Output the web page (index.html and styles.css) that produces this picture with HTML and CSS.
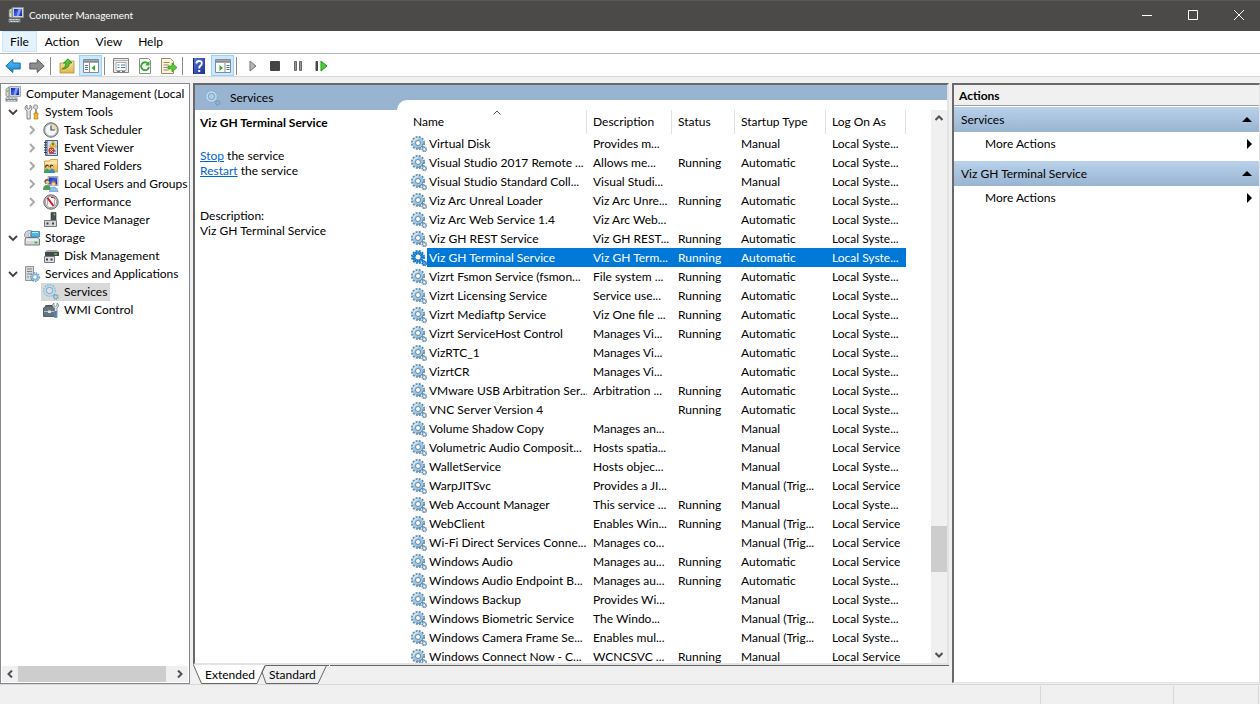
FILE: index.html
```html
<!DOCTYPE html>
<html lang="en">
<head>
<meta charset="utf-8">
<title>Computer Management</title>
<link rel="stylesheet" href="styles.css">
</head>
<body>
<svg class="defs" aria-hidden="true">
  <defs>
    <linearGradient id="g-screen" x1="0" y1="0" x2="1" y2="1"><stop offset="0" stop-color="#1420b8"/><stop offset=".5" stop-color="#3c62e8"/><stop offset="1" stop-color="#0c1a98"/></linearGradient>
    <linearGradient id="g-folder" x1="0" y1="0" x2="0" y2="1"><stop offset="0" stop-color="#fbe7a4"/><stop offset="1" stop-color="#e3b54c"/></linearGradient>
    <linearGradient id="g-help" x1="0" y1="0" x2="1" y2="1"><stop offset="0" stop-color="#5577d8"/><stop offset="1" stop-color="#1c2f94"/></linearGradient>
    <linearGradient id="g-blue" x1="0" y1="0" x2="0" y2="1"><stop offset="0" stop-color="#5cc4f4"/><stop offset="1" stop-color="#1483cf"/></linearGradient>
  </defs>
  <symbol id="computer" viewBox="0 0 16 16">
    <path d="M1 3l3-2v10l-3-1z" fill="#d9dccf" stroke="#777" stroke-width=".7"/>
    <path d="M1.500 5h2" stroke="#49b52a"/>
    <path d="M4.500.5h11v10h-11z" fill="#ced3d8" stroke="#8a9096" stroke-width=".7"/>
    <path d="M6 2h8v7H6z" fill="url(#g-screen)"/>
    <path d="M10.500 2H13l-2 7H8.500z" fill="#a9bdfb" opacity=".7"/>
    <path d="M.5 11.500h12v4H.5z" fill="#7d868c"/><path d="M1.500 12.500h10M2.500 14.500h8" stroke="#dfe4e6" stroke-dasharray="2 1"/>
  </symbol>
  <symbol id="tools" viewBox="0 0 16 16">
    <path d="M3 1v3l1.500 1L6 4V1q2 1 2 3T6.200 7v8H3V7Q1 6 1 4t2-3z" fill="#e3e3e3" stroke="#777" stroke-width=".9"/>
    <path d="M10 1h3l1 3-1.500 1v4h-1V5L9.500 4z" fill="#ddd" stroke="#777" stroke-width=".7"/>
    <path d="M10 9h4v2l-.5 1 .5 3h-4l.5-3-.5-1z" fill="#f4b729" stroke="#b97a10" stroke-width=".7"/>
  </symbol>
  <symbol id="clock" viewBox="0 0 16 16">
    <circle cx="8" cy="8" r="7.200" fill="#b8bbbe" stroke="#696d70"/><circle cx="8" cy="8" r="5.500" fill="#f4f8fb"/>
    <path d="M8 2.500A5.500 5.500 0 0 1 13.500 8H8z" fill="#f6dca0"/><path d="M8 3.500V8h4" fill="none" stroke="#3f5262" stroke-width="1.200"/>
  </symbol>
  <symbol id="event" viewBox="0 0 16 16">
    <path d="M2.500.5h12v15h-12z" fill="#8aa3c0" stroke="#4a6484"/><path d="M5 1h9v14H5z" fill="#cfdeed"/>
    <path d="M1 2.500h3M1 5h3M1 7.500h3M1 10h3M1 12.500h3" stroke="#444"/>
    <path d="M6 11h7M6 13.500h7" stroke="#678"/>
    <path d="M10 1l3.500 6h-7z" fill="#ffd52e" stroke="#ae8610" stroke-width=".6"/><path d="M10 3v2.500" stroke="#222"/>
    <circle cx="8.500" cy="10.500" r="3" fill="#d9362b"/><path d="M7.300 9.300l2.400 2.400m0-2.400l-2.400 2.400" stroke="#fff"/>
  </symbol>
  <symbol id="shared" viewBox="0 0 16 16">
    <path d="M1.500 3h5l1-1.500h7V14h-13z" fill="url(#g-folder)" stroke="#bb9138" stroke-width=".8"/><path d="M2 5h12" stroke="#fff5cc"/>
    <circle cx="4" cy="8.500" r="1.900" fill="#5b4327"/><circle cx="8.500" cy="8.500" r="1.900" fill="#5b4327"/><circle cx="4.500" cy="9.200" r="1.200" fill="#efc8a0"/><circle cx="9" cy="9.200" r="1.200" fill="#efc8a0"/>
    <path d="M1 15q0-4 3-4t3 4z" fill="#38a36a"/><path d="M6 15q0-4 3-4t3 4z" fill="#318fb8"/>
  </symbol>
  <symbol id="users" viewBox="0 0 16 16">
    <path d="M5 .5h10v9H5z" fill="#ced3d8" stroke="#8a9096" stroke-width=".7"/><path d="M6 1.500h8v7H6z" fill="url(#g-screen)"/>
    <circle cx="4" cy="5.500" r="2.600" fill="#6f5128"/><circle cx="4.400" cy="6.300" r="1.700" fill="#efc8a0"/><path d="M0 14q0-5 4-5t4 5z" fill="#4a9f54"/>
    <circle cx="10.500" cy="7.500" r="2.400" fill="#b68b3c"/><circle cx="10.500" cy="8.300" r="1.700" fill="#f4d1ac"/><path d="M6.500 16q0-5 4-5t4.500 5z" fill="#8fc1e6" stroke="#5d94bd" stroke-width=".6"/>
  </symbol>
  <symbol id="perf" viewBox="0 0 16 16">
    <circle cx="8" cy="8" r="7.200" fill="#c7c9cb" stroke="#666"/><circle cx="8" cy="8" r="5.600" fill="#fff" stroke="#777" stroke-width=".6"/>
    <path d="M4.500 11V6M11.500 11V6" stroke="#999" stroke-width=".8"/><path d="M4.500 3.800l6 8.200" stroke="#cf1f2b" stroke-width="2"/><path d="M8 3.500h2.500l1.500 2" stroke="#cf1f2b" fill="none"/>
  </symbol>
  <symbol id="device" viewBox="0 0 16 16">
    <path d="M8 .5h5v9H8z" fill="#4c5052" stroke="#303335" stroke-width=".6"/><circle cx="11.500" cy="2.500" r="1" fill="#54d13f"/>
    <path d="M1.500 8.500h12v6h-12z" fill="#d3d5d6" stroke="#777b7e"/><path d="M3.500 10.500h2v2h-2zM9 10.500h2v2H9z" fill="#3c4042"/>
  </symbol>
  <symbol id="storage" viewBox="0 0 16 16">
    <ellipse cx="5.500" cy="5" rx="5" ry="4.500" fill="#d2d5d8" stroke="#7f8589" stroke-width=".8"/><circle cx="5.500" cy="5" r="1.300" fill="#fff" stroke="#888" stroke-width=".6"/>
    <path d="M7 1.500h8.500v5.500H7z" fill="#4fb5e2" stroke="#2d7da8" stroke-width=".8"/><path d="M8 2.500h6" stroke="#bce8fa"/>
    <path d="M1 9l1.500-1.500h11L15.500 9v6H1z" fill="#d5d8da" stroke="#686c6f" stroke-width=".9"/><path d="M2 10h12" stroke="#fff"/><path d="M10.500 12.500h3" stroke="#37bd2b" stroke-width="1.800"/>
  </symbol>
  <symbol id="disk" viewBox="0 0 16 16">
    <path d="M2 4l2-2h10l2 2v4H2z" fill="#a9adb0"/><path d="M2 4h14v4H2z" fill="#45494b"/><path d="M11 6h3" stroke="#4fd43b" stroke-width="1.400"/>
    <path d="M1.500 8.500h10v6h-10z" fill="#dcdedf" stroke="#777b7e"/><path d="M3 10.500h2v2H3zM7.500 10.500h2v2h-2z" fill="#3c4042"/>
  </symbol>
  <symbol id="gear" viewBox="0 0 16 16">
    <circle cx="7" cy="7" r="6" fill="none" stroke="#5f87a8" stroke-width="2" stroke-dasharray="2 1.140"/>
    <circle cx="7" cy="7" r="4" fill="#f4f9fc" stroke="#9cc5e2" stroke-width="3"/>
    <path d="M2.500 7A4.500 4.500 0 0 1 7 2.500" fill="none" stroke="#d3eaf8" stroke-width="1.400"/>
    <path d="M12.200 7.500A5.300 5.300 0 0 1 5.500 12" fill="none" stroke="#5b84a8" stroke-width="1"/>
    <circle cx="7" cy="7" r="2.500" fill="#fff" stroke="#55799a" stroke-width=".9"/>
    <circle cx="13.300" cy="13.300" r="2" fill="#dbe9f2" stroke="#648baa" stroke-width="1.700" stroke-dasharray="1.200 .4"/><circle cx="13.300" cy="13.300" r=".8" fill="#fff"/>
  </symbol>
  <symbol id="gear-soft" viewBox="0 0 16 16">
    <circle cx="6.500" cy="6.500" r="5.600" fill="none" stroke="#7fb0d2" stroke-width="1.400" stroke-dasharray="1.600 1"/>
    <circle cx="6.500" cy="6.500" r="4.300" fill="none" stroke="#b8dcf0" stroke-width="2"/><circle cx="6.500" cy="6.500" r="3.200" fill="#e5eef5" fill-opacity=".4" stroke="#6b9abb" stroke-width=".8"/>
    <circle cx="12.800" cy="12.800" r="2" fill="none" stroke="#739fbe" stroke-width="1.800" stroke-dasharray="1.200 .4"/>
  </symbol>
  <symbol id="gear-selected" viewBox="0 0 16 16">
    <circle cx="7" cy="7" r="6" fill="none" stroke="#147bd0" stroke-width="2" stroke-dasharray="2 1.140"/>
    <circle cx="7" cy="7" r="4" fill="#fff" stroke="#4ba0e0" stroke-width="3"/><circle cx="7" cy="7" r="4" fill="none" stroke="#0967b6" stroke-width="3" stroke-dasharray="1 1"/>
    <circle cx="13.300" cy="13.300" r="2" fill="#68b1e8" stroke="#086bbf" stroke-width="1.700" stroke-dasharray="1.200 .4"/>
  </symbol>
  <symbol id="server" viewBox="0 0 16 16">
    <path d="M1.500.5h8v14h-8z" fill="#d6dadd" stroke="#868b8f" stroke-width=".9"/><path d="M3 3h5M3 5.500h5M3 8h5" stroke="#7f8488"/><path d="M3 11h2" stroke="#49b52a"/>
    <circle cx="11" cy="11" r="4.200" fill="none" stroke="#5f8eb5" stroke-width="1.400" stroke-dasharray="1.500 1"/><circle cx="11" cy="11" r="2.700" fill="#fff" stroke="#8ab7d6" stroke-width="2"/>
  </symbol>
  <symbol id="wmi" viewBox="0 0 16 16">
    <path d="M3 6V3.500h6V6" fill="none" stroke="#4c565d" stroke-width="1.200"/><path d="M.5 6l2-1.500h9L13 6v8.500H.5z" fill="#66747e" stroke="#3f4a51" stroke-width=".8"/><path d="M1 9.500h11" stroke="#b4bfc6"/><path d="M5 8.500h3v2.500H5z" fill="#e0e4e6"/>
    <path d="M11 1v2.500l1.500 1 1.500-1V1q2 1 1.500 3.500L14 6v9.500h-2.500V6Q9.500 5 9.500 3.500T11 1z" fill="#dce4e9" stroke="#66737c" stroke-width=".7"/><path d="M12 9h1.800v6H12z" fill="#3c82c4"/>
  </symbol>
  <symbol id="arrow" viewBox="0 0 16 16"><path d="M.8 8l7-6.500V5h7.400v6H7.800v3.500z" stroke-linejoin="round"/></symbol>
  <symbol id="left" viewBox="0 0 8 8"><path d="M6 .5L2.500 4 6 7.500" fill="none" stroke="#505050" stroke-width="2"/></symbol>
  <symbol id="right" viewBox="0 0 8 8"><path d="M2 .5L5.500 4 2 7.500" fill="none" stroke="#505050" stroke-width="2"/></symbol>
  <symbol id="up" viewBox="0 0 8 8"><path d="M.5 6L4 2.500 7.500 6" fill="none" stroke="#505050" stroke-width="2"/></symbol>
  <symbol id="down" viewBox="0 0 8 8"><path d="M.5 2L4 5.500 7.500 2" fill="none" stroke="#505050" stroke-width="2"/></symbol>
  <symbol id="open" viewBox="0 0 10 10"><path d="M1 3l4 4 4-4" fill="none" stroke="#404040" stroke-width="1.800"/></symbol>
  <symbol id="closed" viewBox="0 0 10 10"><path d="M3 1l4 4-4 4" fill="none" stroke="#a6a6a6" stroke-width="1.800"/></symbol>
</svg>

<header class="titlebar">
  <svg class="icon"><use href="#computer"/></svg>
  <h1>Computer Management</h1>
  <button class="win-btn" aria-label="Minimize"><svg viewBox="0 0 10 10"><path d="M0 5.500h10"/></svg></button>
  <button class="win-btn" aria-label="Maximize"><svg viewBox="0 0 10 10"><path d="M.5.5h9v9h-9z"/></svg></button>
  <button class="win-btn" aria-label="Close"><svg viewBox="0 0 10 10"><path d="M0 0l10 10M10 0L0 10"/></svg></button>
</header>

<nav class="menubar" aria-label="Menu">
  <button class="menu current">File</button><button class="menu">Action</button><button class="menu">View</button><button class="menu">Help</button>
</nav>

<div class="toolbar" role="toolbar" aria-label="Tools">
  <button class="tool" aria-label="Back"><svg class="icon"><use href="#arrow" fill="url(#g-blue)" stroke="#1a6fae"/></svg></button>
  <button class="tool" aria-label="Forward"><svg class="icon flip"><use href="#arrow" fill="#8d8d8d" stroke="#606060"/></svg></button>
  <span class="sep"></span>
  <button class="tool" aria-label="Up one level"><svg class="icon" viewBox="0 0 16 16"><path d="M1 5h5l1-2h8v12H1z" fill="url(#g-folder)" stroke="#b78e35" stroke-width=".8"/><path d="M3 11Q7 10 7 5H4.500L9 .8 13 5h-2.500Q10 11 3 11z" fill="#56c237" stroke="#278519" stroke-width=".8"/></svg></button>
  <button class="tool on" aria-label="Console tree"><svg class="icon" viewBox="0 0 16 16"><path d="M.5 1.500h15v13H.5z" fill="#fff" stroke="#858b91"/><path d="M1 3.500h14" stroke="#858b91" stroke-width="2.500"/><path d="M6.500 5v9" stroke="#858b91"/><path d="M2 7.500h3M2 9.500h3M2 11.500h3" stroke="#4a78a8"/><path d="M12 7v6L8.500 10z" fill="#35a82b"/></svg></button>
  <span class="sep"></span>
  <button class="tool" aria-label="Properties"><svg class="icon" viewBox="0 0 16 16"><path d="M.5.5h15v14H.5z" fill="#eee" stroke="#838383"/><path d="M1 2.500h14" stroke="#b0b0b0"/><path d="M3 4.500h10v8H3z" fill="#fff" stroke="#9a9a9a" stroke-width=".8"/><path d="M4.500 7h2M4.500 9.500h2M8 7h4M8 9.500h4" stroke="#447bb0"/><path d="M4 13.500h3M9 13.500h3" stroke="#777"/></svg></button>
  <button class="tool" aria-label="Refresh"><svg class="icon" viewBox="0 0 16 16"><path d="M2.500.5h9l2 2v13h-11z" fill="#fff" stroke="#8d8d8d"/><path d="M11 5.500A4 4 0 1 0 12 9" fill="none" stroke="#35a82b" stroke-width="1.800"/><path d="M12.500 3v4.500H8z" fill="#35a82b"/></svg></button>
  <button class="tool" aria-label="Export list"><svg class="icon" viewBox="0 0 16 16"><path d="M.5.5h9l3 3v12H.5z" fill="#fff5d2" stroke="#9a8d6c"/><path d="M2.500 4.500h6M2.500 7h5M2.500 9.500h4M2.500 12h5" stroke="#8b8b8b"/><path d="M7 8h4V5l5 4.500-5 4.500v-3H7z" fill="#59c83a" stroke="#2f8c20" stroke-width=".7"/></svg></button>
  <span class="sep"></span>
  <button class="tool" aria-label="Help"><svg class="icon" viewBox="0 0 16 16"><path d="M2 0h12v16H2z" fill="url(#g-help)"/><path d="M2.500 0v16" stroke="#142272"/><path d="M5.500 5.500Q5.500 3 8.200 3t2.600 2.300Q10.800 7 9.300 7.900 8.200 8.600 8.200 10.500" fill="none" stroke="#fff" stroke-width="1.900"/><path d="M7.200 12h2v2h-2z" fill="#fff"/></svg></button>
  <button class="tool on" aria-label="Action pane"><svg class="icon" viewBox="0 0 16 16"><path d="M.5 1.500h15v13H.5z" fill="#fff" stroke="#858b91"/><path d="M1 3.500h14" stroke="#858b91" stroke-width="2.500"/><path d="M10 5v9" stroke="#858b91"/><path d="M11.500 7.500h3M11.500 9.500h3M11.500 11.500h3" stroke="#4a78a8"/><path d="M4.500 7v6L8 10z" fill="#35a82b"/></svg></button>
  <span class="sep"></span>
  <button class="tool media" aria-label="Start"><svg class="icon" viewBox="0 0 16 16"><path d="M6 3l6 5-6 5z" fill="#b4b4b4" stroke="#777"/></svg></button>
  <button class="tool media" aria-label="Stop"><svg class="icon" viewBox="0 0 16 16"><rect x="3" y="3" width="10" height="10" rx="1" fill="#444"/></svg></button>
  <button class="tool media" aria-label="Pause"><svg class="icon" viewBox="0 0 16 16"><path d="M4.500 3.500h2v9h-2zM9.500 3.500h2v9h-2z" fill="#999" stroke="#666"/></svg></button>
  <button class="tool media" aria-label="Restart"><svg class="icon" viewBox="0 0 16 16"><path d="M3 3.500h1.500v9H3z" fill="#555" stroke="#444"/><path d="M8 3l6 5-6 5z" fill="#42d331" stroke="#219417"/></svg></button>
</div>

<main class="workspace">
  <nav class="tree" aria-label="Console tree">
    <div class="tree-body">
      <a class="node root" href="#"><svg class="icon"><use href="#computer"/></svg>Computer Management (Local</a>
      <ul>
        <li><div class="branch"><svg class="tw"><use href="#open"/></svg><a class="node" href="#"><svg class="icon"><use href="#tools"/></svg>System Tools</a></div>
          <ul>
            <li class="branch"><svg class="tw"><use href="#closed"/></svg><a class="node" href="#"><svg class="icon"><use href="#clock"/></svg>Task Scheduler</a></li>
            <li class="branch"><svg class="tw"><use href="#closed"/></svg><a class="node" href="#"><svg class="icon"><use href="#event"/></svg>Event Viewer</a></li>
            <li class="branch"><svg class="tw"><use href="#closed"/></svg><a class="node" href="#"><svg class="icon"><use href="#shared"/></svg>Shared Folders</a></li>
            <li class="branch"><svg class="tw"><use href="#closed"/></svg><a class="node" href="#"><svg class="icon"><use href="#users"/></svg>Local Users and Groups</a></li>
            <li class="branch"><svg class="tw"><use href="#closed"/></svg><a class="node" href="#"><svg class="icon"><use href="#perf"/></svg>Performance</a></li>
            <li class="branch"><svg class="tw"></svg><a class="node" href="#"><svg class="icon"><use href="#device"/></svg>Device Manager</a></li>
          </ul></li>
        <li><div class="branch"><svg class="tw"><use href="#open"/></svg><a class="node" href="#"><svg class="icon"><use href="#storage"/></svg>Storage</a></div>
          <ul>
            <li class="branch"><svg class="tw"></svg><a class="node" href="#"><svg class="icon"><use href="#disk"/></svg>Disk Management</a></li>
          </ul></li>
        <li><div class="branch"><svg class="tw"><use href="#open"/></svg><a class="node" href="#"><svg class="icon"><use href="#server"/></svg>Services and Applications</a></div>
          <ul>
            <li class="branch"><svg class="tw"></svg><a class="node chosen" href="#"><svg class="icon"><use href="#gear-soft"/></svg>Services</a></li>
            <li class="branch"><svg class="tw"></svg><a class="node" href="#"><svg class="icon"><use href="#wmi"/></svg>WMI Control</a></li>
          </ul></li>
      </ul>
    </div>
    <div class="hscroll">
      <button class="scroll-btn" aria-label="Scroll left"><svg><use href="#left"/></svg></button>
      <div class="htrack"><div class="hthumb"></div></div>
      <button class="scroll-btn" aria-label="Scroll right"><svg><use href="#right"/></svg></button>
    </div>
  </nav>

  <section class="center">
    <div class="result">
      <div class="detail">
        <h2 class="banner"><svg class="icon"><use href="#gear-soft"/></svg>Services</h2>
        <div class="info">
          <h3>Viz GH Terminal Service</h3>
          <p class="links"><a href="#">Stop</a> the service<br><a href="#">Restart</a> the service</p>
          <p>Description:<br>Viz GH Terminal Service</p>
        </div>
      </div>
      <div class="list-side">
        <div class="list-panel">
          <div class="list-view">
            <table>
              <colgroup><col class="c-name"><col class="c-desc"><col class="c-status"><col class="c-start"><col class="c-log"></colgroup>
              <thead><tr><th>Name<svg class="sort" viewBox="0 0 8 5"><path d="M.5 4.500L4 1l3.500 3.500" fill="none" stroke="#555"/></svg></th><th>Description</th><th>Status</th><th>Startup Type</th><th>Log On As</th></tr></thead>
              <tbody>
                <tr><td><div class="svc"><svg class="icon"><use href="#gear"/></svg><span>Virtual Disk</span></div></td><td>Provides m...</td><td></td><td>Manual</td><td>Local Syste...</td></tr>
                <tr><td><div class="svc"><svg class="icon"><use href="#gear"/></svg><span>Visual Studio 2017 Remote ...</span></div></td><td>Allows me...</td><td>Running</td><td>Automatic</td><td>Local Syste...</td></tr>
                <tr><td><div class="svc"><svg class="icon"><use href="#gear"/></svg><span>Visual Studio Standard Coll...</span></div></td><td>Visual Studi...</td><td></td><td>Manual</td><td>Local Syste...</td></tr>
                <tr><td><div class="svc"><svg class="icon"><use href="#gear"/></svg><span>Viz Arc Unreal Loader</span></div></td><td>Viz Arc Unre...</td><td>Running</td><td>Automatic</td><td>Local Syste...</td></tr>
                <tr><td><div class="svc"><svg class="icon"><use href="#gear"/></svg><span>Viz Arc Web Service 1.4</span></div></td><td>Viz Arc Web...</td><td></td><td>Automatic</td><td>Local Syste...</td></tr>
                <tr><td><div class="svc"><svg class="icon"><use href="#gear"/></svg><span>Viz GH REST Service</span></div></td><td>Viz GH REST...</td><td>Running</td><td>Automatic</td><td>Local Syste...</td></tr>
                <tr class="selected"><td><div class="svc"><svg class="icon"><use href="#gear-selected"/></svg><span>Viz GH Terminal Service</span></div></td><td>Viz GH Term...</td><td>Running</td><td>Automatic</td><td>Local Syste...</td></tr>
                <tr><td><div class="svc"><svg class="icon"><use href="#gear"/></svg><span>Vizrt Fsmon Service (fsmon...</span></div></td><td>File system ...</td><td>Running</td><td>Automatic</td><td>Local Syste...</td></tr>
                <tr><td><div class="svc"><svg class="icon"><use href="#gear"/></svg><span>Vizrt Licensing Service</span></div></td><td>Service use...</td><td>Running</td><td>Automatic</td><td>Local Syste...</td></tr>
                <tr><td><div class="svc"><svg class="icon"><use href="#gear"/></svg><span>Vizrt Mediaftp Service</span></div></td><td>Viz One file ...</td><td>Running</td><td>Automatic</td><td>Local Syste...</td></tr>
                <tr><td><div class="svc"><svg class="icon"><use href="#gear"/></svg><span>Vizrt ServiceHost Control</span></div></td><td>Manages Vi...</td><td>Running</td><td>Automatic</td><td>Local Syste...</td></tr>
                <tr><td><div class="svc"><svg class="icon"><use href="#gear"/></svg><span>VizRTC_1</span></div></td><td>Manages Vi...</td><td></td><td>Automatic</td><td>Local Syste...</td></tr>
                <tr><td><div class="svc"><svg class="icon"><use href="#gear"/></svg><span>VizrtCR</span></div></td><td>Manages Vi...</td><td></td><td>Automatic</td><td>Local Syste...</td></tr>
                <tr><td><div class="svc"><svg class="icon"><use href="#gear"/></svg><span>VMware USB Arbitration Ser...</span></div></td><td>Arbitration ...</td><td>Running</td><td>Automatic</td><td>Local Syste...</td></tr>
                <tr><td><div class="svc"><svg class="icon"><use href="#gear"/></svg><span>VNC Server Version 4</span></div></td><td></td><td>Running</td><td>Automatic</td><td>Local Syste...</td></tr>
                <tr><td><div class="svc"><svg class="icon"><use href="#gear"/></svg><span>Volume Shadow Copy</span></div></td><td>Manages an...</td><td></td><td>Manual</td><td>Local Syste...</td></tr>
                <tr><td><div class="svc"><svg class="icon"><use href="#gear"/></svg><span>Volumetric Audio Composit...</span></div></td><td>Hosts spatia...</td><td></td><td>Manual</td><td>Local Service</td></tr>
                <tr><td><div class="svc"><svg class="icon"><use href="#gear"/></svg><span>WalletService</span></div></td><td>Hosts objec...</td><td></td><td>Manual</td><td>Local Syste...</td></tr>
                <tr><td><div class="svc"><svg class="icon"><use href="#gear"/></svg><span>WarpJITSvc</span></div></td><td>Provides a JI...</td><td></td><td>Manual (Trig...</td><td>Local Service</td></tr>
                <tr><td><div class="svc"><svg class="icon"><use href="#gear"/></svg><span>Web Account Manager</span></div></td><td>This service ...</td><td>Running</td><td>Manual</td><td>Local Syste...</td></tr>
                <tr><td><div class="svc"><svg class="icon"><use href="#gear"/></svg><span>WebClient</span></div></td><td>Enables Win...</td><td>Running</td><td>Manual (Trig...</td><td>Local Service</td></tr>
                <tr><td><div class="svc"><svg class="icon"><use href="#gear"/></svg><span>Wi-Fi Direct Services Conne...</span></div></td><td>Manages co...</td><td></td><td>Manual (Trig...</td><td>Local Service</td></tr>
                <tr><td><div class="svc"><svg class="icon"><use href="#gear"/></svg><span>Windows Audio</span></div></td><td>Manages au...</td><td>Running</td><td>Automatic</td><td>Local Service</td></tr>
                <tr><td><div class="svc"><svg class="icon"><use href="#gear"/></svg><span>Windows Audio Endpoint B...</span></div></td><td>Manages au...</td><td>Running</td><td>Automatic</td><td>Local Syste...</td></tr>
                <tr><td><div class="svc"><svg class="icon"><use href="#gear"/></svg><span>Windows Backup</span></div></td><td>Provides Wi...</td><td></td><td>Manual</td><td>Local Syste...</td></tr>
                <tr><td><div class="svc"><svg class="icon"><use href="#gear"/></svg><span>Windows Biometric Service</span></div></td><td>The Windo...</td><td></td><td>Manual (Trig...</td><td>Local Syste...</td></tr>
                <tr><td><div class="svc"><svg class="icon"><use href="#gear"/></svg><span>Windows Camera Frame Se...</span></div></td><td>Enables mul...</td><td></td><td>Manual (Trig...</td><td>Local Syste...</td></tr>
                <tr><td><div class="svc"><svg class="icon"><use href="#gear"/></svg><span>Windows Connect Now - C...</span></div></td><td>WCNCSVC ...</td><td>Running</td><td>Manual</td><td>Local Service</td></tr>
              </tbody>
            </table>
          </div>
          <div class="vscroll">
            <button class="scroll-btn" aria-label="Scroll up"><svg><use href="#up"/></svg></button>
            <div class="vtrack"><div class="vthumb"></div></div>
            <button class="scroll-btn" aria-label="Scroll down"><svg><use href="#down"/></svg></button>
          </div>
        </div>
      </div>
    </div>
    <div class="tabs" role="tablist">
      <svg class="tab-art" viewBox="0 0 136 19"><path d="M0 0l9 18h55l8-18z" fill="#fff"/><path d="M.5 0l8 18.500H64L72 .5M69 7l4 11.500h52L133.500.5M69 7l3.500-6.500H136" fill="none" stroke="#666"/></svg>
      <button class="tab" role="tab" aria-selected="true">Extended</button>
      <button class="tab" role="tab" aria-selected="false">Standard</button>
      <span class="tab-line"></span>
    </div>
  </section>

  <aside class="actions">
    <h2>Actions</h2>
    <button class="group">Services<svg viewBox="0 0 10 5"><path d="M0 5l5-5 5 5z"/></svg></button>
    <button class="more">More Actions<svg viewBox="0 0 5 10"><path d="M0 0l5 5-5 5z"/></svg></button>
    <button class="group">Viz GH Terminal Service<svg viewBox="0 0 10 5"><path d="M0 5l5-5 5 5z"/></svg></button>
    <button class="more">More Actions<svg viewBox="0 0 5 10"><path d="M0 0l5 5-5 5z"/></svg></button>
  </aside>
</main>

<footer class="statusbar"><span class="cell wide"></span><span class="cell mid"></span><span class="cell end"></span></footer>
</body>
</html>
```
FILE: styles.css
```css
* { box-sizing: border-box; }

body {
  margin: 0;
  height: 100vh;
  display: flex;
  flex-direction: column;
  overflow: hidden;
  background: #f0f0f0;
  color: #000;
  font: 12px/15px Lato, "Open Sans", sans-serif;
}

h1, h2, h3, p, ul { margin: 0; padding: 0; }
ul { list-style: none; }

button {
  margin: 0;
  padding: 0;
  border: 0;
  background: none;
  color: inherit;
  font: inherit;
  text-align: left;
}

svg { display: block; flex: none; }
.defs { position: absolute; width: 0; height: 0; }
.icon { width: 16px; height: 16px; }
.flip { transform: scaleX(-1); }

/* Title bar */
.titlebar {
  display: flex;
  align-items: center;
  height: 31px;
  flex: none;
  padding: 0 1px 2px 8px;
  gap: 5px;
  background: #4c4a48;
  border-top: 1px solid #5c5a58;
  color: #fff;
}
.titlebar h1 { flex: 1; font-size: 10px; font-weight: 400; }
.win-btn { width: 41px; height: 28px; display: flex; align-items: center; justify-content: center; }
.win-btn svg { width: 10px; height: 10px; fill: none; stroke: #fff; overflow: visible; }

/* Menu */
.menubar {
  display: flex;
  flex: none;
  height: 23px;
  padding-left: 2px;
  background: #fff;
  border-bottom: 1px solid #b4b4be;
}
.menu { height: 21px; padding: 0 7px; border: 1px solid transparent; line-height: 19px; }
.menu.current { background: #e5f3ff; border-color: #cce8ff; }

/* Toolbar */
.toolbar {
  display: flex;
  align-items: center;
  flex: none;
  gap: 1px;
  height: 23px;
  padding: 1px 0 0 1px;
  background: #fff;
  border-bottom: 1px solid #d7d7d7;
}
.tool { width: 23px; height: 21px; display: flex; align-items: center; justify-content: center; border: 1px solid transparent; }
.tool.media { width: 22px; }
.tool.on { background: #cce8ff; border-color: #99d1ff; }
.sep { width: 1px; height: 18px; margin: 0 3px 0 1px; background: #8a8a8a; }

/* Workspace */
.workspace { flex: 1; min-height: 0; display: flex; padding-top: 6px; }

.tree {
  flex: none;
  width: 190px;
  display: flex;
  flex-direction: column;
  background: #fff;
  border: 1px solid #828790;
}
.tree-body { flex: 1; min-height: 0; overflow: hidden; padding: 1px 0 0 2px; }
.tree-body > ul { padding-left: 1px; }
.tree-body > ul ul { padding-left: 19px; }
.branch { display: flex; align-items: center; height: 18px; }
.tw { width: 18px; height: 10px; padding: 0 4px; }
.node {
  display: flex;
  align-items: center;
  gap: 5px;
  height: 18px;
  padding: 0 3px 0 2px;
  color: inherit;
  line-height: 16px;
  text-decoration: none;
  white-space: nowrap;
}
.chosen { background: #d9d9d9; }

.scroll-btn { width: 16px; height: 16px; flex: none; display: flex; align-items: center; justify-content: center; }
.scroll-btn svg { width: 8px; height: 8px; }
.hscroll { display: flex; margin: 0 1px 1px; background: #f0f0f0; }
.htrack { flex: 1; }
.hthumb { width: 96%; height: 16px; background: #cdcdcd; }

/* Result pane */
.center { flex: 1; min-width: 0; display: flex; flex-direction: column; margin: 0 3px; }
.result {
  flex: 1;
  min-height: 0;
  display: flex;
  background: #fff;
  border: 2px solid #696969;
  border-color: #696969 #e3e3e3 #e3e3e3 #696969;
}
.detail { flex: none; width: 202px; }
.banner { display: flex; align-items: center; gap: 9px; height: 25px; padding-left: 10px; background: #99b4d1; font-size: 12px; font-weight: 400; }
.info { padding: 5px; }
.info h3 { font-size: 12px; font-weight: 700; }
.links { margin: 18px 0 30px; }
.links a { color: #06c; }

.list-side { flex: 1; min-width: 0; display: flex; background: linear-gradient(#99b4d1 25px, #fff 25px); }
.list-panel { flex: 1; min-width: 0; display: flex; margin-top: 15px; padding-top: 10px; background: #fff; border-top-left-radius: 10px; }
.list-view { flex: 1; min-width: 0; padding-left: 13px; overflow: hidden; }

table { table-layout: fixed; width: 496px; border-collapse: separate; border-spacing: 0; }
.c-name { width: 177px; }
.c-desc { width: 85px; }
.c-status { width: 63px; }
.c-start { width: 91px; }
.c-log { width: 80px; }
th { position: relative; height: 24px; padding: 0 0 0 6px; border-right: 1px solid #e0e0e0; font-weight: 400; line-height: 16px; text-align: left; white-space: nowrap; }
th:first-child { padding-left: 3px; }
.sort { position: absolute; left: 83px; top: 0; width: 8px; height: 5px; }
td { height: 19px; padding: 0 0 0 6px; white-space: nowrap; overflow: hidden; }
td:first-child { padding-left: 1px; }
.svc { display: flex; align-items: center; }
.svc span { flex: 1; padding-left: 2px; line-height: 19px; }
.selected td:not(:first-child), .selected .svc span { background: #0078d7; color: #fff; }

.vscroll { flex: none; width: 16px; display: flex; flex-direction: column; background: #f0f0f0; }
.vtrack { flex: 1; display: flex; flex-direction: column; justify-content: flex-end; padding-bottom: 75px; }
.vthumb { height: 46px; background: #cdcdcd; }

/* View tabs */
.tabs { position: relative; flex: none; display: flex; height: 19px; padding-left: 12px; gap: 14px; }
.tab-art { position: absolute; left: 0; top: 0; width: 136px; height: 19px; }
.tab { position: relative; line-height: 19px; height: 19px; }
.tab-line { flex: 1; border-top: 1px solid #666; }

/* Actions */
.actions {
  flex: none;
  width: 308px;
  margin-bottom: 1px;
  background: #fff;
  border: 2px solid #696969;
  border-color: #696969 #e3e3e3 #e3e3e3 #696969;
  border-right-width: 1px;
  border-bottom-width: 1px;
}
.actions h2 { height: 21px; margin-bottom: 1px; padding-left: 5px; font-size: 12px; line-height: 21px; background: #f0f0f0; border-bottom: 1px solid #a0a0a0; }
.group, .more { display: flex; align-items: center; justify-content: space-between; width: 100%; }
.group { height: 25px; padding: 0 7px; background: linear-gradient(#b9d1ea, #99b4d1); }
.group svg { width: 10px; height: 5px; }
.more { height: 24px; margin-bottom: 5px; padding: 0 7px 0 31px; line-height: 16px; }
.more svg { width: 5px; height: 10px; }

/* Status bar */
.statusbar { flex: none; display: flex; height: 20px; padding-top: 1px; border-top: 1px solid #d7d7d7; }
.cell { border-right: 1px solid #d7d7d7; }
.wide { flex: 1; }
.mid { width: 133px; }
.end { width: 85px; margin-right: 1px; }
```
